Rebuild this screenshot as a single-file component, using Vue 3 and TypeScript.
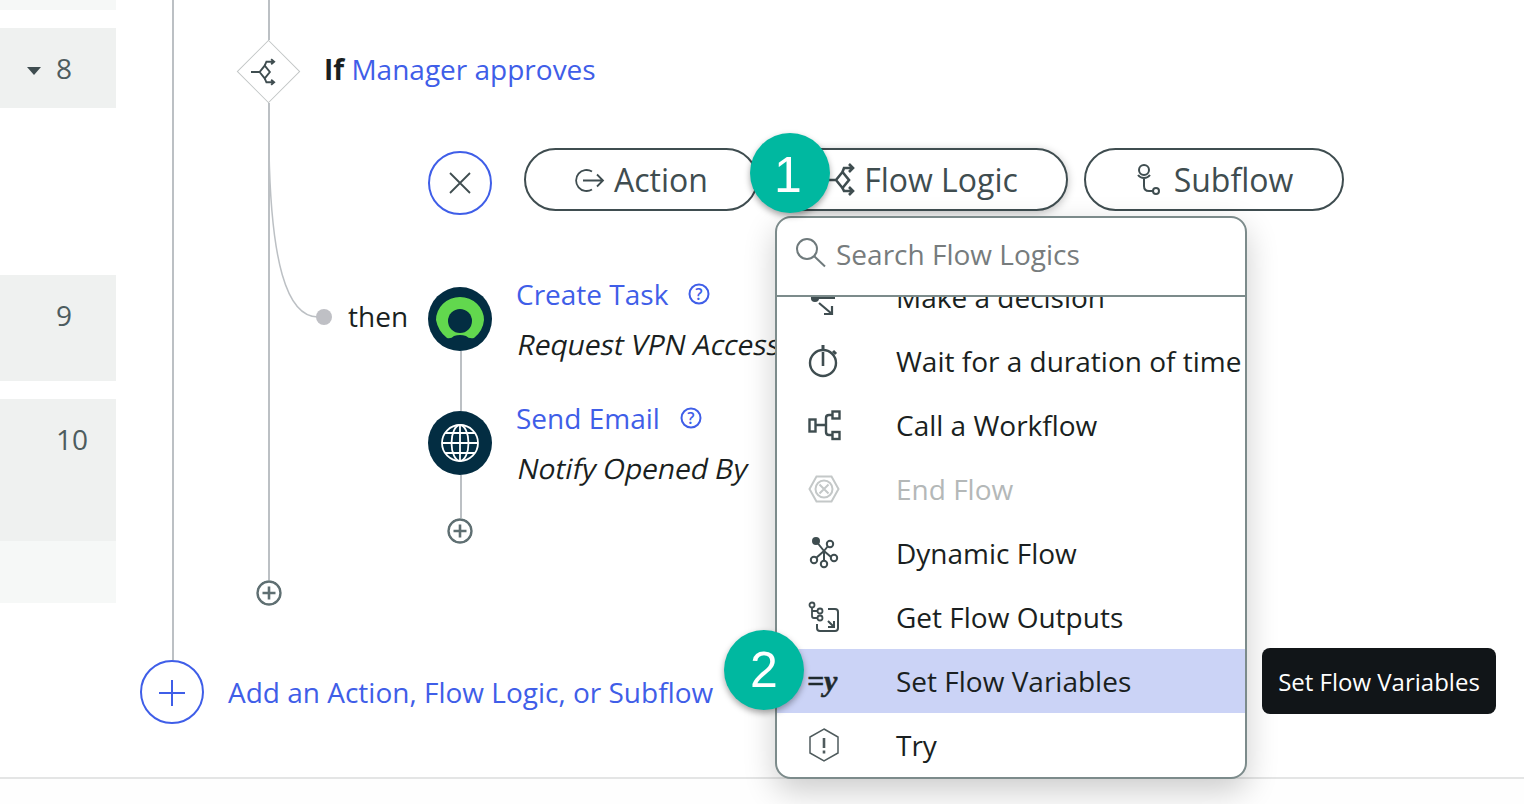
<script setup lang="ts">
interface GutterRow {
    label: string
    height: number
    gap: number
    faint?: boolean
    open?: boolean
}

const rows: GutterRow[] = [
    { label: '', height: 10, gap: 0, faint: true },
    { label: '8', height: 80, gap: 18, open: true },
    { label: '9', height: 106, gap: 167 },
    { label: '10', height: 142, gap: 18 },
    { label: '', height: 62, gap: 0, faint: true }
]
</script>

<template>
    <div class="page">
        <div class="main">
            <aside class="gutter">
                <div v-for="(row, i) in rows" :key="i" class="gutter-row" :class="{ faint: row.faint }"
                    :style="{ height: row.height + 'px', marginTop: row.gap + 'px' }">
                    <span v-if="row.open" class="caret"></span>
                    {{ row.label }}
                </div>
            </aside>

            <section class="canvas">
                <!-- connectors -->
                <svg class="wires" width="1408" height="778" viewBox="0 0 1408 778" fill="none">
                    <path d="M57 0V660M153 0V40M153 103V581M345 351V411M345 475V518" stroke="#bcc0c4" stroke-width="2" />
                    <path d="M153 150C155 260 170 317 202 317" stroke="#bcc0c4" stroke-width="1.5" />
                    <circle cx="208" cy="317" r="8" fill="#bfc0c5" />
                </svg>

                <!-- if node -->
                <div class="if-node">
                    <div class="diamond">
                        <svg width="24" height="24" viewBox="0 0 28 28" fill="none" stroke="#3f4d50" stroke-width="2.200">
                            <path d="M0 14H10L16 6.500L22 14L16 21.500L10 14" />
                            <path d="M16 6.500L18 2H27M23.500 -1L27 2L23.500 5M16 21.500L18 26H27M23.500 23L27 26L23.500 29" />
                        </svg>
                    </div>
                    <div class="if-label"><b>If</b> <a>Manager approves</a></div>
                </div>

                <!-- add buttons -->
                <div class="picker">
                    <button class="round-btn">
                        <svg width="24" height="24" viewBox="0 0 24 24" fill="none" stroke="#3f4d50" stroke-width="1.800">
                            <path d="M2 2L22 22M22 2L2 22" />
                        </svg>
                    </button>
                    <button class="pill pill-action">
                        <svg width="28" height="24" viewBox="0 0 28 24" fill="none" stroke="#3f4d50" stroke-width="1.800">
                            <path d="M16 3.500A10.500 10.500 0 1 0 16 21.500" />
                            <path d="M7 12.500H27M21 6.500L27 12.500L21 18.500" />
                        </svg>
                        Action
                    </button>
                    <button class="pill pill-logic">
                        <svg width="28" height="30" viewBox="0 0 28 30" fill="none" stroke="#3f4d50" stroke-width="2.600">
                            <path d="M0 15H10L16.500 7L23 15L16.500 23L10 15" />
                            <path d="M16.500 7L18 3H27M23 -1L27 3L23 7M16.500 23L18 26H27M23 22L27 26L23 30" />
                        </svg>
                        Flow Logic
                    </button>
                    <button class="pill pill-sub">
                        <svg width="24" height="32" viewBox="0 0 24 32" fill="none" stroke="#3f4d50" stroke-width="2">
                            <circle cx="7" cy="6" r="5" />
                            <path d="M1 11C4 15 10 15 13 11M7 13V22Q7 27 12 27H16" />
                            <circle cx="19" cy="27" r="3" />
                        </svg>
                        Subflow
                    </button>
                </div>

                <!-- then branch -->
                <span class="then">then</span>

                <div class="task task-one">
                    <svg class="task-icon" width="64" height="64" viewBox="0 0 64 64">
                        <circle cx="32" cy="32" r="32" fill="#032d42" />
                        <path d="M19 51Q10 44 8 33A24 23 0 0 1 56 33Q55 44 46 51Q41 52 38 49Q32 47 26 49Q23 52 19 51Z"
                            fill="#62d84e" />
                        <circle cx="32" cy="34" r="12" fill="#032d42" />
                    </svg>
                    <div class="task-text">
                        <div class="task-title">
                            <a>Create Task</a>
                            <svg class="help" width="22" height="22" viewBox="0 0 22 22" fill="none">
                                <circle cx="11" cy="11" r="9.500" stroke="#3f5ee8" stroke-width="2" />
                                <text x="11" y="16.500" text-anchor="middle" class="help-mark">?</text>
                            </svg>
                        </div>
                        <div class="task-desc"><span>Request VPN Access</span></div>
                    </div>
                </div>

                <div class="task task-two">
                    <svg class="task-icon" width="64" height="64" viewBox="0 0 64 64">
                        <circle cx="32" cy="32" r="32" fill="#032d42" />
                        <g fill="none" stroke="#fff" stroke-width="1.800">
                            <circle cx="32" cy="32" r="18" />
                            <ellipse cx="32" cy="32" rx="8.500" ry="18" />
                            <path d="M32 14V50M14 32H50M17 22H47M17 42H47" />
                        </g>
                    </svg>
                    <div class="task-text">
                        <div class="task-title">
                            <a>Send Email</a>
                            <svg class="help" width="22" height="22" viewBox="0 0 22 22" fill="none">
                                <circle cx="11" cy="11" r="9.500" stroke="#3f5ee8" stroke-width="2" />
                                <text x="11" y="16.500" text-anchor="middle" class="help-mark">?</text>
                            </svg>
                        </div>
                        <div class="task-desc"><span>Notify Opened By</span></div>
                    </div>
                </div>

                <svg class="mini-add mini-inner" width="26" height="26" viewBox="0 0 26 26" fill="none" stroke="#5f6f72">
                    <circle cx="13" cy="13" r="11.500" stroke-width="2.400" />
                    <path d="M6.500 13H19.500M13 6.500V19.500" stroke-width="2.600" />
                </svg>
                <svg class="mini-add mini-outer" width="26" height="26" viewBox="0 0 26 26" fill="none" stroke="#5f6f72">
                    <circle cx="13" cy="13" r="11.500" stroke-width="2.400" />
                    <path d="M6.500 13H19.500M13 6.500V19.500" stroke-width="2.600" />
                </svg>

                <div class="add-row">
                    <button class="round-btn">
                        <svg width="28" height="28" viewBox="0 0 28 28" fill="none" stroke="#3f5ee8" stroke-width="2">
                            <path d="M1 15H27M14 2V28" />
                        </svg>
                    </button>
                    <a>Add an Action, Flow Logic, or Subflow</a>
                </div>

                <!-- dropdown -->
                <div class="menu">
                    <div class="menu-search">
                        <svg width="32" height="32" viewBox="0 0 32 32" fill="none" stroke="#6f7a7c" stroke-width="2">
                            <circle cx="12" cy="11" r="10" />
                            <path d="M19 18L30 28.500" />
                        </svg>
                        <span>Search Flow Logics</span>
                    </div>
                    <div class="menu-list">
                        <ul class="menu-items">
                            <li>
                                <svg class="item-icon" width="32" height="32" viewBox="0 0 32 32" fill="none"
                                    stroke="#3f4d50" stroke-width="2.200">
                                    <circle cx="7" cy="17" r="3" fill="#3f4d50" />
                                    <path d="M7 17H27M11 22L24 33M24 25V33H16" />
                                </svg>
                                Make a decision
                            </li>
                            <li>
                                <svg class="item-icon" width="32" height="32" viewBox="0 0 32 32" fill="none"
                                    stroke="#3f4d50" stroke-width="2.400">
                                    <circle cx="15" cy="18" r="13" />
                                    <path d="M15 0V4M25 6L28 9" stroke-width="3" />
                                    <path d="M15 7V21" stroke-width="2.600" />
                                </svg>
                                Wait for a duration of time
                            </li>
                            <li>
                                <svg class="item-icon" width="32" height="32" viewBox="0 0 32 32" fill="none"
                                    stroke="#3f4d50" stroke-width="2.400">
                                    <rect x="1.500" y="10.500" width="6" height="12" />
                                    <rect x="24.500" y="2.500" width="7" height="7" />
                                    <rect x="24.500" y="23" width="7" height="7" />
                                    <path d="M7 16H18M24 6H21Q18 6 18 9V23Q18 26 21 26H24" />
                                </svg>
                                Call a Workflow
                            </li>
                            <li class="disabled">
                                <svg class="item-icon" width="32" height="32" viewBox="0 0 32 32" fill="none"
                                    stroke="#c4c8c8" stroke-width="2">
                                    <path d="M1.500 16L8.500 3.500H23.500L30.500 16L23.500 28.500H8.500Z" />
                                    <circle cx="16" cy="16" r="8.500" />
                                    <path d="M11.500 11.500L20.500 20.500M20.500 11.500L11.500 20.500" />
                                </svg>
                                End Flow
                            </li>
                            <li>
                                <svg class="item-icon" width="32" height="32" viewBox="0 0 32 32" fill="none"
                                    stroke="#3f4d50" stroke-width="2">
                                    <circle cx="8" cy="4" r="3" fill="#3f4d50" />
                                    <path d="M8 4L16 14L20 9M16 14L8 21M16 14V24M16 14L23 20" />
                                    <circle cx="22" cy="7" r="3.200" />
                                    <circle cx="6" cy="23" r="3.200" />
                                    <circle cx="16" cy="27" r="3.200" />
                                    <circle cx="26" cy="21" r="3.200" />
                                </svg>
                                Dynamic Flow
                            </li>
                            <li>
                                <svg class="item-icon" width="32" height="32" viewBox="0 0 32 32" fill="none"
                                    stroke="#3f4d50" stroke-width="1.800">
                                    <circle cx="4" cy="4" r="2.500" />
                                    <path d="M4 7V15Q4 17 6 17H9M4 10H9" />
                                    <circle cx="12" cy="10" r="2.500" />
                                    <circle cx="12" cy="17" r="2.500" />
                                    <path d="M20 8H27Q30 8 30 11V27Q30 30 27 30H12Q9 30 9 27V23" stroke-width="2" />
                                    <path d="M20 20L26 26M26 20V26H20" stroke-width="2" />
                                </svg>
                                Get Flow Outputs
                            </li>
                            <li class="active">
                                <span class="item-icon eq-icon">=y</span>
                                Set Flow Variables
                            </li>
                            <li>
                                <svg class="item-icon" width="32" height="34" viewBox="0 0 32 34" fill="none"
                                    stroke="#4f5b5d" stroke-width="1.500">
                                    <path d="M16 1L30 9V25L16 33L2 25V9Z" />
                                    <path d="M16 10V20" stroke-width="2.600" />
                                    <path d="M16 22.500V25.500" stroke-width="2.600" />
                                </svg>
                                Try
                            </li>
                        </ul>
                    </div>
                </div>

                <div class="tooltip">Set Flow Variables</div>

                <div class="badge badge-one">1</div>
                <div class="badge badge-two">2</div>
            </section>
        </div>
        <footer class="footer"></footer>
    </div>
</template>

<style scoped>
.page {
    width: 1524px;
    height: 804px;
    overflow: hidden;
    display: flex;
    flex-direction: column;
    font-family: "Open Sans", "Liberation Sans", sans-serif;
    font-size: 28px;
    color: #1a1f21;
    background: #fff;
}

.main {
    height: 777px;
    display: flex;
    position: relative;
    z-index: 1;
}

.footer {
    border-top: 2px solid #e4e5e5;
    flex: 1;
    background: #fefefe;
}

.gutter {
    width: 116px;
    flex: none;
}

.gutter-row {
    background: #eff1f0;
    color: #4d5c5e;
    padding: 20px 0 0 56px;
    line-height: 40px;
    box-sizing: border-box;
    position: relative;
}

.gutter-row.faint {
    background: #f6f8f7;
    padding: 0;
}

.caret {
    position: absolute;
    left: 27px;
    top: 39px;
    border-left: 7px solid transparent;
    border-right: 7px solid transparent;
    border-top: 8px solid #3f4d50;
}

.canvas {
    flex: 1;
    position: relative;
}

.wires {
    position: absolute;
    left: 0;
    top: 0;
}

a {
    color: #3f5ee8;
}

.if-node {
    position: absolute;
    left: 120px;
    top: 40px;
    display: flex;
    align-items: center;
    gap: 24px;
}

.diamond {
    width: 64px;
    height: 63px;
    display: flex;
    align-items: center;
    justify-content: center;
    position: relative;
}

.diamond::before {
    content: '';
    position: absolute;
    left: 9.500px;
    top: 9px;
    width: 45px;
    height: 45px;
    border: 1.500px solid #c2c6c6;
    box-sizing: border-box;
    transform: rotate(45deg);
}

.diamond svg {
    position: relative;
    overflow: visible;
    margin-right: 10px;
}

.if-label {
    margin-top: -6px;
}

.if-label b {
    font-weight: 700;
}

.picker {
    position: absolute;
    left: 312px;
    top: 148px;
    display: flex;
    align-items: flex-start;
    gap: 16px;
}

.round-btn {
    width: 64px;
    height: 64px;
    border-radius: 50%;
    border: 2px solid #3f5ee8;
    background: #fff;
    padding: 0;
    display: flex;
    align-items: center;
    justify-content: center;
    flex: none;
}

.picker .round-btn {
    margin-right: 16px;
    margin-top: 3px;
}

.pill {
    height: 63px;
    border: 2px solid #3f4d50;
    border-radius: 32px;
    background: #fff;
    color: #3f4d50;
    font-family: inherit;
    font-size: 32px;
    padding: 0 0 0 2px;
    display: flex;
    align-items: center;
    justify-content: center;
    gap: 10px;
    box-sizing: border-box;
}

.pill svg {
    overflow: visible;
}

.pill-action {
    width: 234px;
}

.pill-logic {
    width: 294px;
    box-shadow: 0 2px 8px rgba(0, 0, 0, 0.25);
}

.pill-sub {
    width: 260px;
    gap: 13px;
}

.then {
    position: absolute;
    left: 232px;
    top: 297px;
    line-height: 38px;
}

.task {
    position: absolute;
    left: 312px;
    display: flex;
    gap: 24px;
}

.task-one {
    top: 287px;
}

.task-two {
    top: 411px;
}

.task-icon {
    flex: none;
}

.task-text {
    margin-top: -13px;
    white-space: nowrap;
}

.task-title {
    display: flex;
    align-items: center;
    gap: 20px;
    line-height: 40px;
}

.task-desc {
    margin-top: 10px;
    line-height: 40px;
}

/* the product slants the upright face, the real italic is much narrower */
.task-desc span {
    display: inline-block;
    margin-left: -2px;
    transform: skewX(-12deg);
    transform-origin: left bottom;
}

.help-mark {
    font-size: 16px;
    font-weight: 600;
    fill: #3f5ee8;
    font-family: "Open Sans", sans-serif;
}

.mini-add {
    position: absolute;
    background: #fff;
    border-radius: 50%;
}

.mini-inner {
    left: 331px;
    top: 518px;
}

.mini-outer {
    left: 140px;
    top: 580px;
}

.add-row {
    position: absolute;
    left: 24px;
    top: 660px;
    display: flex;
    align-items: center;
    gap: 24px;
}

.menu {
    position: absolute;
    left: 659px;
    top: 216px;
    width: 472px;
    height: 563px;
    box-sizing: border-box;
    display: flex;
    flex-direction: column;
    background: #fff;
    border: 2px solid #7c8b8b;
    border-radius: 16px;
    box-shadow: 0 12px 32px rgba(0, 0, 0, 0.2);
    overflow: hidden;
}

.menu-search {
    height: 79px;
    flex: none;
    box-sizing: border-box;
    border-bottom: 2px solid #7c8b8b;
    display: flex;
    align-items: center;
    gap: 9px;
    padding: 0 0 5px 18px;
    color: #777c7d;
}

.menu-search svg {
    margin-top: 0;
}

.menu-list {
    flex: 1;
    overflow: hidden;
}

.menu-items {
    list-style: none;
    margin: -32px 0 0;
    padding: 0;
}

.menu-items li {
    height: 64px;
    display: flex;
    align-items: center;
    padding-left: 31px;
    white-space: nowrap;
}

.item-icon {
    width: 32px;
    flex: none;
    margin-right: 56px;
    overflow: visible;
}

.menu-items li.disabled {
    color: #b4b8b8;
}

.menu-items li.active {
    background: #cbd3f6;
}

.eq-icon {
    font-family: "Liberation Serif", serif;
    font-weight: 700;
    font-style: italic;
    font-size: 30px;
    color: #1f2a2d;
    -webkit-text-stroke: 0.5px #1f2a2d;
    line-height: 1;
    margin-left: -1px;
    margin-right: 57px;
}

.tooltip {
    position: absolute;
    left: 1146px;
    top: 648px;
    width: 234px;
    height: 66px;
    box-sizing: border-box;
    background: #111518;
    color: #fff;
    border-radius: 8px;
    font-size: 24px;
    display: flex;
    align-items: center;
    justify-content: center;
    white-space: nowrap;
}

.badge {
    position: absolute;
    width: 80px;
    height: 80px;
    box-sizing: border-box;
    border-radius: 50%;
    background: #00b8a0;
    color: #fff;
    font-family: "Liberation Sans", sans-serif;
    font-size: 50px;
    display: flex;
    align-items: center;
    justify-content: center;
    box-shadow: 0 3px 6px rgba(0, 0, 0, 0.35);
}

.badge-one {
    left: 634px;
    top: 133px;
    padding: 3px 4px 0 0;
}

.badge-two {
    left: 608px;
    top: 630px;
}
</style>

<style>
html,
body {
    margin: 0;
    background: #fff;
}
</style>
